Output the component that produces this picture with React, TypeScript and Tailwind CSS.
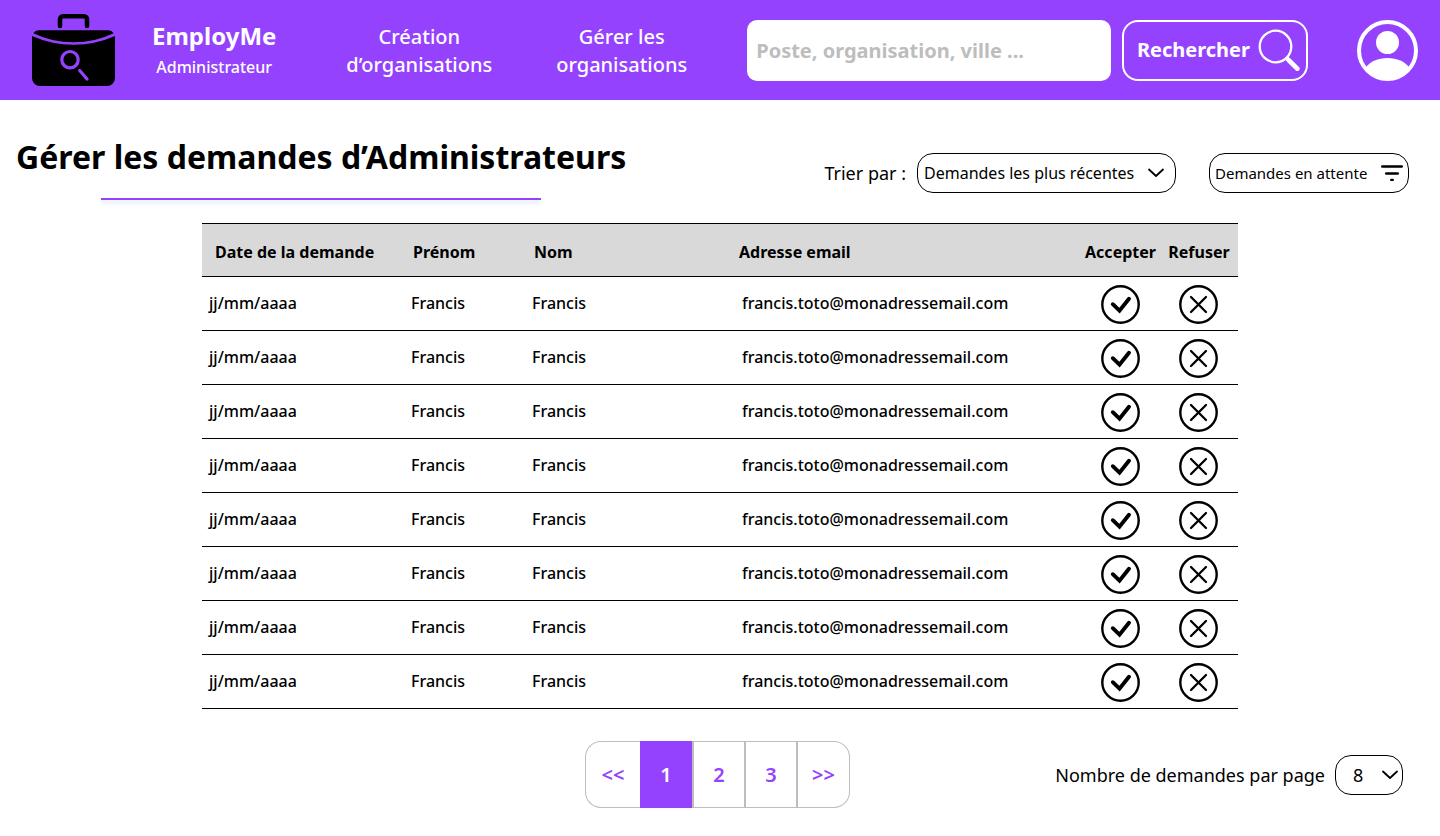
import React, { useState } from "react";

type Request = { id: number; date: string; firstName: string; lastName: string; email: string };

const requests: Request[] = Array.from({ length: 8 }, (_, id) => ({
  id,
  date: "jj/mm/aaaa",
  firstName: "Francis",
  lastName: "Francis",
  email: "francis.toto@monadressemail.com",
}));

function BriefcaseLogo() {
  return (
    <svg viewBox="0 0 83 72" className="h-[72px] w-[83px] shrink-0" fill="none" aria-hidden="true">
      <path d="M28 12V5.300a3 3 0 0 1 3-3h21a3 3 0 0 1 3 3V12" stroke="#000" strokeWidth="4.600" strokeLinecap="round" />
      <path d="M7 16.300h69c2.500 0 4.300 1 5.600 2.900Q63 28.300 41.500 28.300T1.400 19.200C2.700 17.300 4.500 16.300 7 16.300z" fill="#000" />
      <path d="M0 22Q20 30.800 41.500 30.800T83 22V64a8 8 0 0 1-8 8H8a8 8 0 0 1-8-8z" fill="#000" />
      <circle cx="38" cy="45.700" r="8.200" stroke="#9542ff" strokeWidth="3.200" />
      <path d="M47.700 56.500l7.300 8.500" stroke="#9542ff" strokeWidth="3.200" strokeLinecap="round" />
    </svg>
  );
}

function SearchGlyph() {
  return (
    <svg viewBox="0 0 42 42" className="h-[42px] w-[42px] shrink-0" fill="none" stroke="#fff" aria-hidden="true">
      <circle cx="17.500" cy="17.500" r="15.800" strokeWidth="2.300" />
      <path d="M28.500 29l1.500 1.500" strokeWidth="4" />
      <path d="M30.500 31L39.300 39.600" strokeWidth="4.800" strokeLinecap="round" />
    </svg>
  );
}

function AvatarGlyph() {
  return (
    <svg viewBox="0 0 61 61" className="h-[61px] w-[61px]" aria-hidden="true">
      <circle cx="30.500" cy="30.500" r="28.500" fill="none" stroke="#fff" strokeWidth="4" />
      <circle cx="30.500" cy="22.500" r="11.500" fill="#fff" />
      <path d="M9 47.500C13 41.500 21 38 30.500 38S48 41.500 52 47.500C47 55.500 39.500 60 30.500 60S14 55.500 9 47.500z" fill="#fff" />
    </svg>
  );
}

function Chevron() {
  return (
    <svg viewBox="0 0 16 10" className="h-[10px] w-4" fill="none" stroke="#000" strokeWidth="1.800" aria-hidden="true">
      <path d="M1 1.500l7 6.500 7-6.500" strokeLinecap="round" strokeLinejoin="round" />
    </svg>
  );
}

function FilterGlyph() {
  return (
    <svg viewBox="0 0 22 16" className="h-4 w-[22px]" fill="none" stroke="#000" strokeWidth="2.400" strokeLinecap="round" aria-hidden="true">
      <path d="M1.200 1.500h19.600M5.200 8.500h11.600M10.300 15h1.400" />
    </svg>
  );
}

function AcceptGlyph() {
  return (
    <svg viewBox="0 0 39 39" className="h-[39px] w-[39px]" fill="none" stroke="#000" aria-hidden="true">
      <circle cx="19.500" cy="19.500" r="18.200" strokeWidth="2.400" />
      <path d="M11.800 19.200l6.700 6.500L28 13.700" strokeWidth="3.900" strokeLinecap="round" />
    </svg>
  );
}

function RefuseGlyph() {
  return (
    <svg viewBox="0 0 39 39" className="h-[39px] w-[39px]" fill="none" stroke="#000" aria-hidden="true">
      <circle cx="19.500" cy="19.500" r="18.200" strokeWidth="2.400" />
      <path d="M12 12l15 15M27 12L12 27" strokeWidth="2.300" strokeLinecap="round" />
    </svg>
  );
}

function Header() {
  return (
    <header className="flex h-[100px] items-center bg-[#9542ff] pr-[22px] pl-8 text-white">
      <BriefcaseLogo />
      <div className="ml-[37px] shrink-0 pt-[2px] text-center">
        <p className="text-2xl leading-8 font-bold">EmployMe</p>
        <p className="text-base leading-[30px] font-medium">Administrateur</p>
      </div>
      <nav className="ml-[70px] flex shrink-0 gap-16 pt-px text-center text-xl leading-7 font-medium">
        <a href="#creation">Création<br />d’organisations</a>
        <a href="#gestion">Gérer les<br />organisations</a>
      </nav>
      <form className="ml-[60px] flex min-w-0 flex-1 gap-[11px]" onSubmit={(e) => e.preventDefault()}>
        <input
          type="search"
          aria-label="Rechercher un poste, une organisation ou une ville"
          placeholder="Poste, organisation, ville ..."
          className="h-[61px] min-w-0 flex-1 rounded-[10px] bg-white px-[9px] text-xl font-bold text-black placeholder:text-[#bdbdbd]"
        />
        <button type="submit" className="flex h-[61px] w-[186px] shrink-0 items-center justify-end gap-2 rounded-2xl border-2 border-white pr-[6px] text-xl font-bold">
          Rechercher
          <SearchGlyph />
        </button>
      </form>
      <a href="#profil" aria-label="Mon profil" className="ml-[49px] shrink-0">
        <AvatarGlyph />
      </a>
    </header>
  );
}

function Toolbar() {
  return (
    <div className="flex items-start justify-between pr-[31px] pl-4">
      <div className="pt-[35px]">
        <h1 className="text-[32px] leading-[44px] font-bold">Gérer les demandes d’Administrateurs</h1>
        <div className="mx-auto mt-[19px] h-[2px] w-[440px] bg-[#9542ff] shadow-[0_3px_4px_#cfe2fb]" />
      </div>
      <div className="flex items-center pt-[53px]">
        <label htmlFor="sort" className="mr-[11px] text-lg">Trier par :</label>
        <div className="relative">
          <select id="sort" className="block h-10 w-[259px] appearance-none rounded-2xl border border-black bg-white pl-[6px] text-base">
            <option>Demandes les plus récentes</option>
            <option>Demandes les plus anciennes</option>
          </select>
          <span className="pointer-events-none absolute inset-y-0 right-3 flex items-center"><Chevron /></span>
        </div>
        <button type="button" className="ml-[33px] flex h-10 w-[200px] items-center justify-between rounded-2xl border border-black px-[5px] text-[15px]">
          Demandes en attente
          <FilterGlyph />
        </button>
      </div>
    </div>
  );
}

function RequestTable() {
  return (
    <table className="mx-auto mt-[23px] w-full max-w-[1036px] table-fixed border-separate border-spacing-0 text-left text-base">
      <colgroup>
        <col className="w-[202px]" />
        <col className="w-[121px]" />
        <col className="w-[210px]" />
        <col />
        <col className="w-[78px]" />
        <col className="w-[79px]" />
      </colgroup>
      <thead>
        <tr className="bg-[#d9d9d9]">
          <th scope="col" className="h-[54px] border-y border-black pt-1 pl-[13px]">Date de la demande</th>
          <th scope="col" className="border-y border-black pt-1 pl-[9px]">Prénom</th>
          <th scope="col" className="border-y border-black pt-1 pl-[9px]">Nom</th>
          <th scope="col" className="border-y border-black pt-1 pl-1">Adresse email</th>
          <th scope="col" className="border-y border-black pt-1 pl-px text-center">Accepter</th>
          <th scope="col" className="border-y border-black pt-1 pl-px text-center">Refuser</th>
        </tr>
      </thead>
      <tbody className="font-medium">
        {requests.map((r) => (
          <tr key={r.id}>
            <td className="h-[54px] border-b border-black pb-[2px] pl-[7px]">{r.date}</td>
            <td className="border-b border-black pb-[2px] pl-[7px]">{r.firstName}</td>
            <td className="border-b border-black pb-[2px] pl-[7px]">{r.lastName}</td>
            <td className="border-b border-black pb-[2px] pl-[7px]">{r.email}</td>
            <td className="border-b border-black pt-[2px]">
              <button type="button" aria-label="Accepter" className="mx-auto block"><AcceptGlyph /></button>
            </td>
            <td className="border-b border-black pt-[2px]">
              <button type="button" aria-label="Refuser" className="mx-auto block"><RefuseGlyph /></button>
            </td>
          </tr>
        ))}
      </tbody>
    </table>
  );
}

function Footer() {
  const [page, setPage] = useState(1);
  return (
    <div className="mt-8 grid grid-cols-[1fr_auto_1fr] items-center pr-[37px] pl-8">
      <nav aria-label="Pagination" className="col-start-2 flex h-[67px] text-xl font-semibold text-[#9542ff]">
        <button type="button" aria-label="Page précédente" className="w-[55px] rounded-l-2xl border border-r-0 border-[#bdbdbd]" onClick={() => setPage(Math.max(1, page - 1))}>&lt;&lt;</button>
        {[1, 2, 3].map((n) => (
          <button
            key={n}
            type="button"
            aria-current={n === page ? "page" : undefined}
            className={
              n === page
                ? "w-[52px] border border-[#9542ff] bg-[#9542ff] text-white"
                : "w-[52px] border-y border-l-2 border-[#bdbdbd]"
            }
            onClick={() => setPage(n)}
          >
            {n}
          </button>
        ))}
        <button type="button" aria-label="Page suivante" className="w-[54px] rounded-r-2xl border border-l-2 border-[#bdbdbd]" onClick={() => setPage(Math.min(3, page + 1))}>&gt;&gt;</button>
      </nav>
      <div className="flex items-center gap-[10px] justify-self-end pt-px">
        <label htmlFor="page-size" className="text-lg">Nombre de demandes par page</label>
        <div className="relative">
          <select id="page-size" className="block h-10 w-[68px] appearance-none rounded-2xl border border-black bg-white pl-[17px] text-lg">
            <option>8</option>
            <option>16</option>
            <option>24</option>
          </select>
          <span className="pointer-events-none absolute inset-y-0 right-[5px] flex items-center"><Chevron /></span>
        </div>
      </div>
    </div>
  );
}

export default function App() {
  return (
    <div className="min-h-screen bg-white pb-7 font-['Noto_Sans',sans-serif] text-black">
      <Header />
      <main>
        <Toolbar />
        <RequestTable />
        <Footer />
      </main>
    </div>
  );
}
